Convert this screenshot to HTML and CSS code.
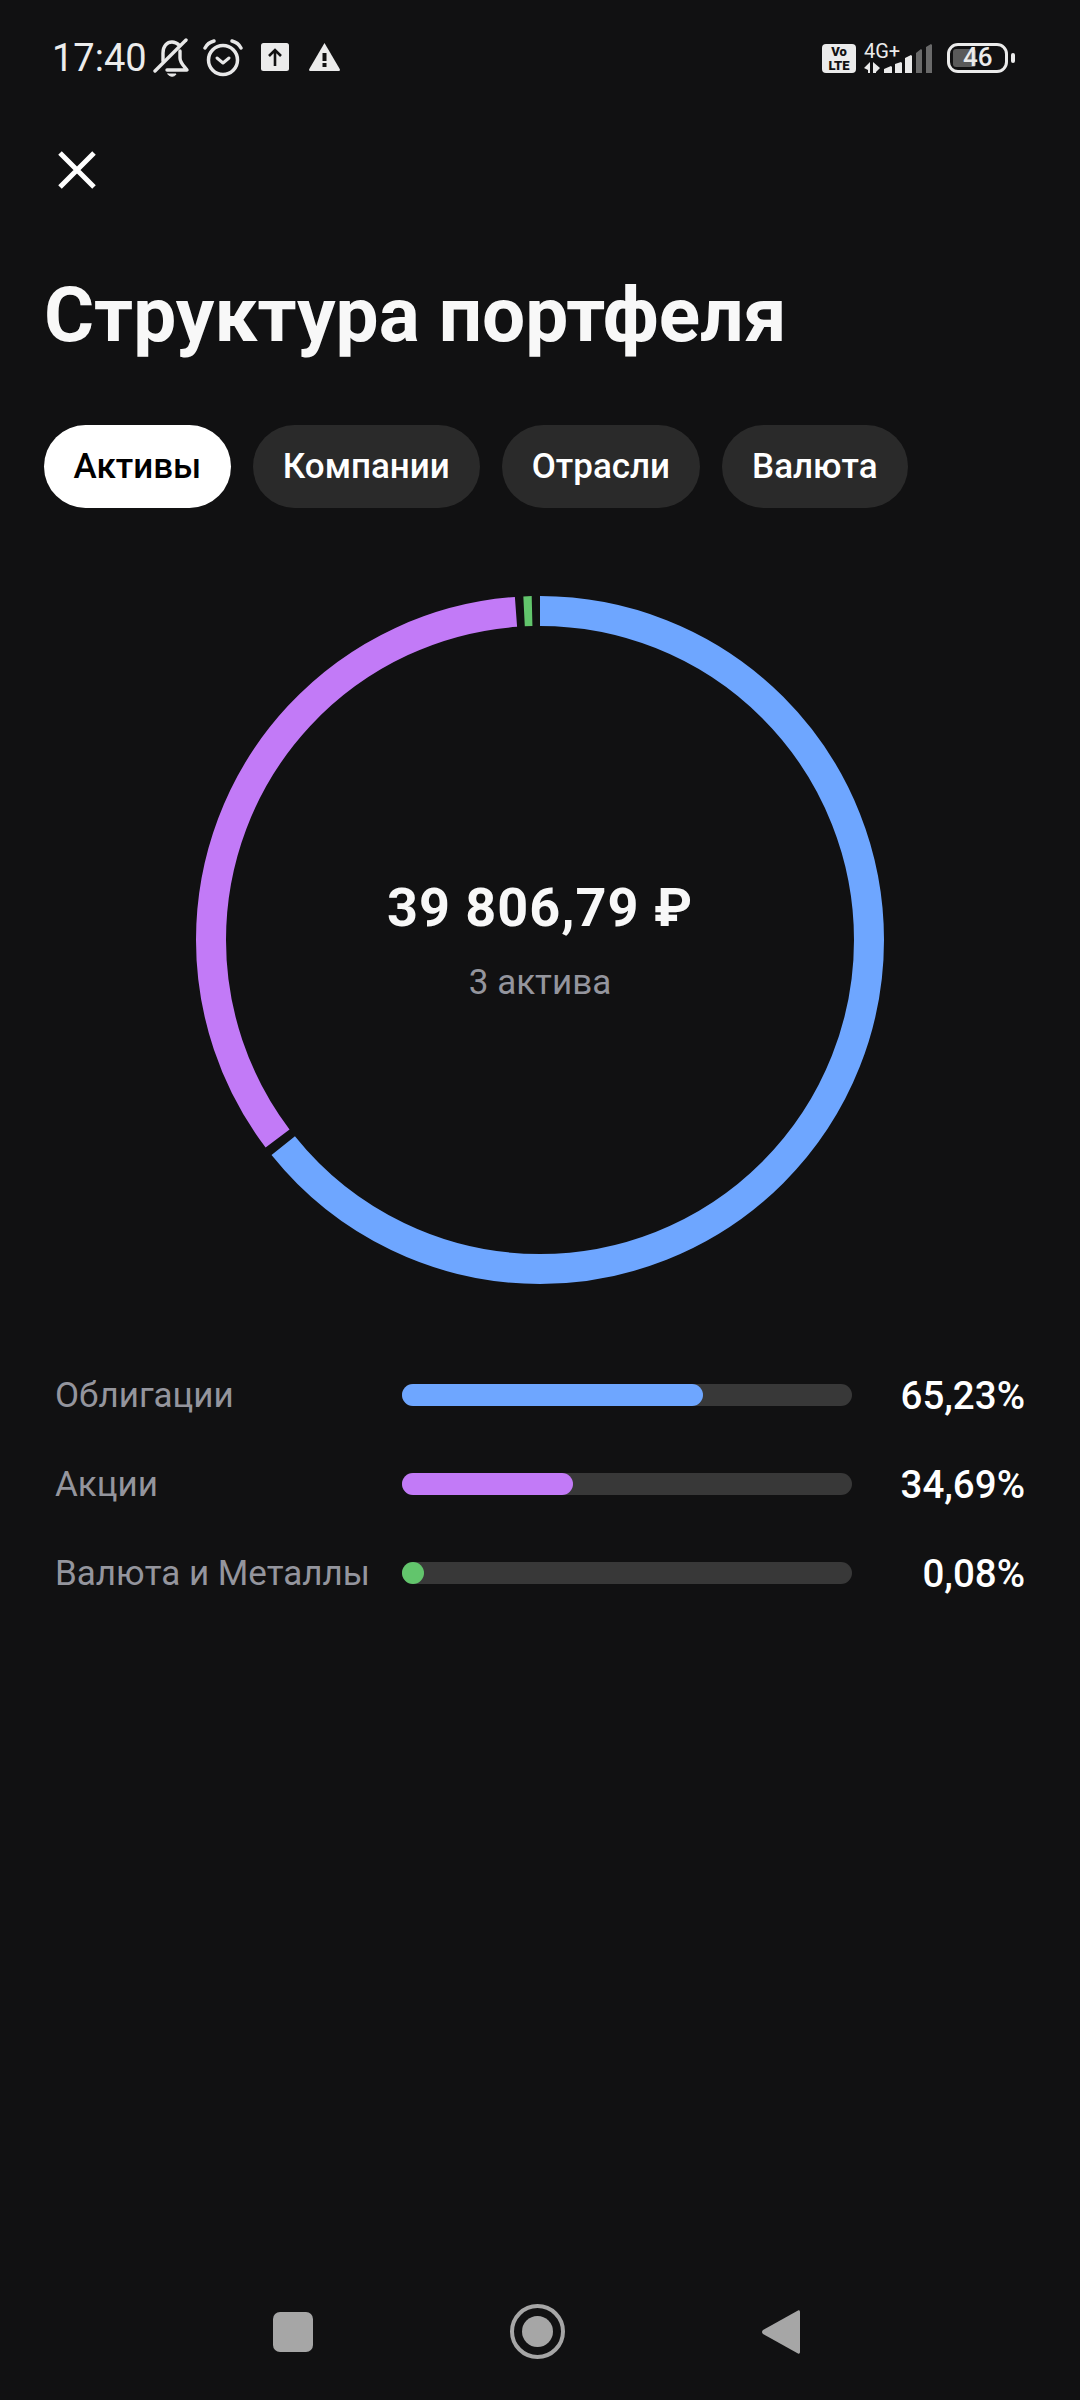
FILE: index.html
```html
<!DOCTYPE html>
<html lang="ru">
<head>
    <meta charset="UTF-8">
    <meta name="viewport" content="width=device-width, initial-scale=1.0">
    <title>Структура портфеля</title>
    <link rel="stylesheet" href="styles.css">
</head>
<body>
<div class="screen">

    <div class="status-bar">
        <span class="time">17:40</span>
        <svg class="icon-bell" width="38" height="40" viewBox="0 0 38 40" fill="none" stroke="#e8e8e8" stroke-width="3.4" stroke-linecap="round" stroke-linejoin="round">
            <path d="M2 33 33 2"/>
            <path d="M10 23V15C10 8 14 4 19 4 22 4 24 5 26 7"/>
            <path d="M27 13V20C27 25 31 28 34 32H14"/>
            <path d="M15 36H23C22 39 16 39 15 36Z" fill="#e8e8e8" stroke-width="1"/>
        </svg>
        <svg class="icon-alarm" width="40" height="38" viewBox="0 0 40 38" fill="none" stroke="#e8e8e8" stroke-linecap="round" stroke-linejoin="round">
            <circle cx="20" cy="21" r="14.5" stroke-width="3.5"/>
            <path d="M14 19 20 24 26 19" stroke-width="3"/>
            <path d="M2 9C4 5 7 3 11 2" stroke-width="3.4"/>
            <path d="M29 2C33 3 36 5 38 9" stroke-width="3.4"/>
        </svg>
        <svg class="icon-upload" width="28" height="28" viewBox="0 0 28 28">
            <rect width="28" height="28" rx="2.5" fill="#ebebeb"/>
            <path d="M14 23V7M8 13 14 7 20 13" fill="none" stroke="#111112" stroke-width="2.6"/>
        </svg>
        <svg class="icon-warning" width="33" height="29" viewBox="0 0 32 29">
            <path d="M16 1 31.5 27.5 31 29H1L.5 27.5Z" fill="#ebebeb"/>
            <rect x="14" y="11" width="4" height="8" fill="#111112"/>
            <rect x="14" y="21" width="4" height="4" fill="#111112"/>
        </svg>

        <div class="status-right">
            <div class="volte">Vo<br>LTE</div>
            <div class="network">
                <span class="network-type">4G+</span>
                <svg width="68" height="29" viewBox="0 0 68 29">
                    <path d="M0 24 6 18V29H4V26ZM9 18 16 24 12 28V29H9Z" fill="#ebebeb"/>
                    <path d="M20 25 27 22 28 23V29H20ZM31 20 37 18 38 19V29H31ZM41 14 47 11 48 12V29H41Z" fill="#ebebeb"/>
                    <path d="M52 9 57 5 58 6V29H52ZM62 3 67 0 68 1V29H62Z" fill="#6a6a6a"/>
                </svg>
            </div>
            <div class="battery">
                <div class="battery-level" style="width: 46%"></div>
                <span class="battery-text">46</span>
            </div>
            <div class="battery-tip"></div>
        </div>
    </div>

    <svg class="close" width="38" height="38" viewBox="0 0 38 38" fill="none" stroke="#ffffff" stroke-width="5">
        <path d="M2 2 36 36M36 2 2 36"/>
    </svg>

    <h1 class="title">Структура портфеля</h1>

    <div class="tabs">
        <div class="tab tab-active">Активы</div>
        <div class="tab">Компании</div>
        <div class="tab">Отрасли</div>
        <div class="tab">Валюта</div>
    </div>

    <div class="donut">
        <svg width="688" height="688" viewBox="0 0 688 688" fill="none" stroke-width="30">
            <!-- pathLength is 360, so the dashes below are degrees from the top -->
            <g transform="rotate(-90 344 344)">
                <circle cx="344" cy="344" r="329" pathLength="360" stroke="#6ea6ff" stroke-dasharray="231.3 360"/>
                <circle cx="344" cy="344" r="329" pathLength="360" stroke="#c27af7" stroke-dasharray="122.9 360" stroke-dashoffset="-232.9"/>
                <circle cx="344" cy="344" r="329" pathLength="360" stroke="#62c56c" stroke-dasharray="1.4 360" stroke-dashoffset="-357.2"/>
            </g>
        </svg>
        <div class="donut-label">
            <div class="total">39 806,79 ₽</div>
            <div class="count">3 актива</div>
        </div>
    </div>

    <div class="rows">
        <div class="row">
            <span class="row-name">Облигации</span>
            <div class="track"><div class="fill fill-blue" style="width: 301.5px"></div></div>
            <span class="row-value">65,23%</span>
        </div>
        <div class="row">
            <span class="row-name">Акции</span>
            <div class="track"><div class="fill fill-purple" style="width: 171px"></div></div>
            <span class="row-value">34,69%</span>
        </div>
        <div class="row">
            <span class="row-name">Валюта и Металлы</span>
            <div class="track"><div class="fill fill-green" style="width: 22.5px"></div></div>
            <span class="row-value">0,08%</span>
        </div>
    </div>

    <div class="nav">
        <div class="nav-square"></div>
        <div class="nav-home"><div class="nav-home-dot"></div></div>
        <svg width="38" height="46" viewBox="0 0 38 46">
            <path d="M36 1.5C37 1 38 1.500 38 3V43C38 44.500 37 45 36 44.500L1 25C-.3 24 -.3 22 1 21Z" fill="#a6a6a6"/>
        </svg>
    </div>

</div>
</body>
</html>
```

FILE: styles.css
```css
* {
    box-sizing: border-box;
}
body {
    margin: 0;
    background: #111112;
    color: #ffffff;
    font-family: Roboto, "Noto Sans", sans-serif;
}
.screen {
    height: 2400px;
    display: flex;
    flex-direction: column;
}

/* status bar */
.status-bar {
    display: flex;
    align-items: center;
    height: 40px;
    margin-top: 38px;
    padding-left: 52px;
}
.time {
    font-size: 38px;
    color: #ececec;
    margin-right: 6px;
}
.icon-alarm {
    margin-left: 12px;
}
.icon-upload {
    margin: 0 0 2px 18px;
}
.icon-warning {
    margin: 0 0 3px 19px;
}
.status-right {
    display: flex;
    align-items: center;
    margin-left: auto;
    padding-right: 65px;
}
.volte {
    width: 34px;
    height: 29px;
    padding-top: 1px;
    background: #ebebeb;
    border-radius: 4px;
    color: #111112;
    font-size: 13px;
    font-weight: 900;
    line-height: 14px;
    text-align: center;
}
.network {
    position: relative;
    display: flex;
    margin-left: 8px;
}
.network-type {
    position: absolute;
    left: 0;
    top: -5px;
    font-size: 20px;
    line-height: 24px;
    color: #ebebeb;
}
.battery {
    position: relative;
    width: 61px;
    height: 30px;
    margin-left: 15px;
    padding: 3px;
    border: 3.5px solid #ebebeb;
    border-radius: 11px;
}
.battery-level {
    height: 100%;
    background: #5a5a5a;
    border-radius: 3px;
}
.battery-text {
    position: absolute;
    left: 13px;
    top: 0;
    font-size: 26px;
    font-weight: 500;
    line-height: 23px;
    color: #ebebeb;
}
.battery-tip {
    width: 4px;
    height: 10px;
    margin-left: 3px;
    background: #ebebeb;
    border-radius: 2px;
}

.close {
    flex: none;
    margin: 73px 0 0 58px;
}
.title {
    margin: 81px 0 0 44px;
    font-size: 76.6px;
    font-weight: 700;
    line-height: 90px;
    color: #f8f8f8;
}

/* tabs */
.tabs {
    display: flex;
    gap: 22px;
    margin: 65px 0 0 44px;
}
.tab {
    height: 83px;
    padding: 0 30px;
    background: #2a2a2a;
    border-radius: 42px;
    font-size: 35px;
    font-weight: 500;
    line-height: 83px;
}
.tab-active {
    padding: 0 29.5px;
    background: #ffffff;
    color: #000000;
}

/* donut */
.donut {
    position: relative;
    flex: none;
    width: 688px;
    height: 688px;
    margin: 88px auto 0;
}
.donut svg {
    display: block;
}
.donut-label {
    position: absolute;
    inset: 0;
    display: flex;
    flex-direction: column;
    align-items: center;
    justify-content: center;
}
.total {
    font-size: 54px;
    font-weight: 700;
    line-height: 64px;
    letter-spacing: 1px;
    color: #f8f8f8;
}
.count {
    margin-top: 22px;
    font-size: 35px;
    line-height: 42px;
    color: #94959d;
}

/* rows */
.rows {
    display: flex;
    flex-direction: column;
    gap: 45px;
    margin-top: 89px;
    padding: 0 55px;
}
.row {
    display: flex;
    align-items: center;
    height: 44px;
}
.row-name {
    width: 346.5px;
    font-size: 35px;
    color: #94959d;
}
.track {
    width: 450.5px;
    height: 22px;
    background: #383838;
    border-radius: 11px;
}
.fill {
    height: 100%;
    border-radius: 11px;
}
.fill-blue {
    background: #6ea6ff;
}
.fill-purple {
    background: #c27af7;
}
.fill-green {
    background: #62c56c;
}
.row-value {
    flex: 1;
    font-size: 38.5px;
    font-weight: 500;
    text-align: right;
}

/* bottom navigation */
.nav {
    display: flex;
    align-items: center;
    gap: 197px;
    margin-top: auto;
    padding: 0 0 41px 273px;
}
.nav-square {
    width: 40px;
    height: 40px;
    background: #a6a6a6;
    border-radius: 7px;
}
.nav-home {
    display: flex;
    align-items: center;
    justify-content: center;
    width: 55px;
    height: 55px;
    border: 4px solid #a6a6a6;
    border-radius: 50%;
}
.nav-home-dot {
    width: 31px;
    height: 31px;
    background: #a6a6a6;
    border-radius: 50%;
}
```
